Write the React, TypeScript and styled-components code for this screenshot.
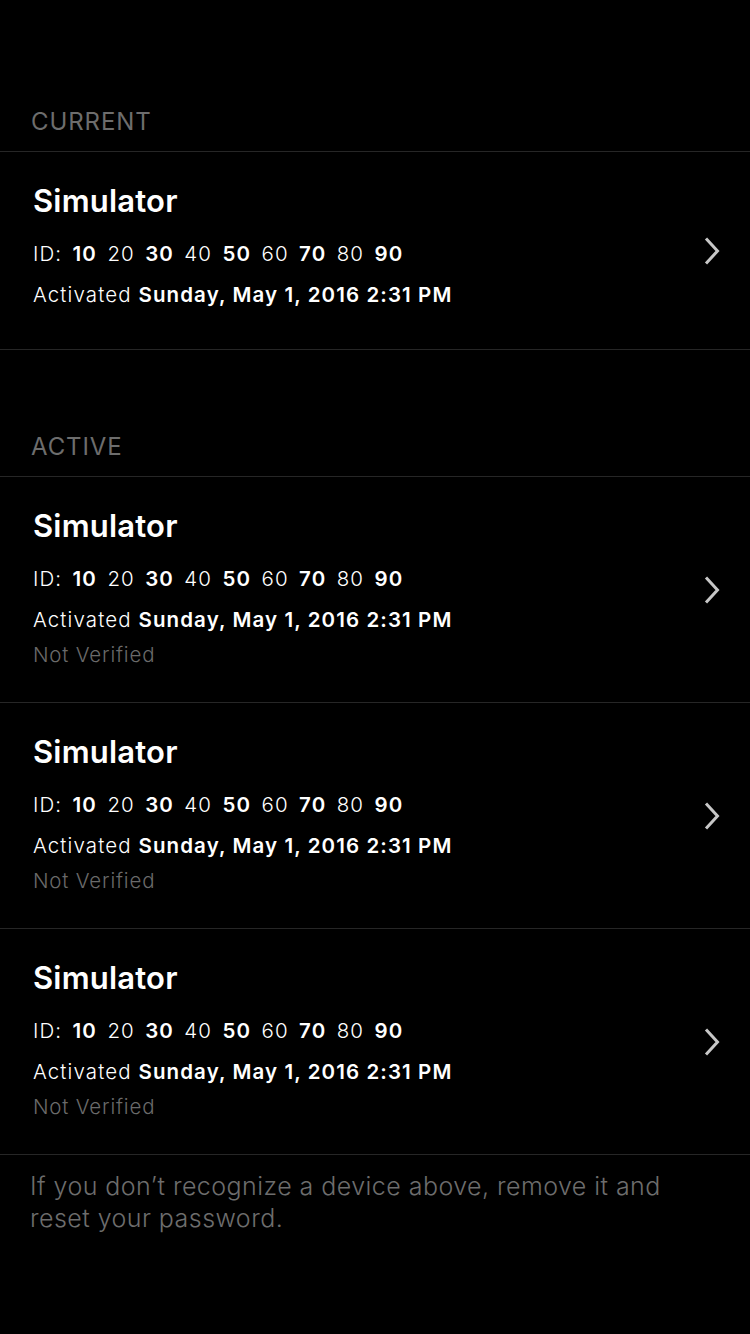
import React from "react";
import styled, { createGlobalStyle } from "styled-components";

const GlobalStyle = createGlobalStyle`
  html, body { margin: 0; padding: 0; background: #000; }
  body { font-family: Inter, "Noto Sans", "Liberation Sans", sans-serif; -webkit-font-smoothing: antialiased; }
`;

const Page = styled.div`
  width: 750px;
  min-height: 1334px;
  background: #000;
  padding-top: 25px;
  box-sizing: border-box;
`;

const SectionHeader = styled.div`
  height: 127px;
  box-sizing: border-box;
  display: flex;
  align-items: flex-end;
  padding: 0 31px 14px;
  border-bottom: 1px solid #262626;
  color: #6d6d6d;
  font-size: 24px;
  line-height: 30px;
  font-weight: 400;
  letter-spacing: 0.9px;
`;

const Row = styled.div`
  display: flex;
  align-items: center;
  border-bottom: 1px solid #262626;
  padding-left: 33px;
`;

const Info = styled.div<{ $verified?: boolean }>`
  flex: 1;
  display: flex;
  flex-direction: column;
  padding: 30px 0 ${(p) => (p.$verified ? 39 : 32)}px;
`;

const Title = styled.div`
  color: #fff;
  font-size: 31px;
  line-height: 38px;
  font-weight: 600;
  letter-spacing: 0.2px;
`;

const Line = styled.div<{ $gap: number; $wordSpace?: number }>`
  color: #fff;
  font-size: 20.5px;
  line-height: 30px;
  font-weight: 300;
  letter-spacing: 1.1px;
  word-spacing: ${(p) => p.$wordSpace ?? 0}px;
  margin-top: ${(p) => p.$gap}px;
  white-space: nowrap;
`;

const Strong = styled.span`
  font-weight: 600;
`;

const Muted = styled.div`
  color: #6a6a6a;
  font-size: 20.5px;
  line-height: 30px;
  font-weight: 300;
  letter-spacing: 0.8px;
  margin-top: 5px;
`;

const Chevron = styled.svg`
  display: block;
  width: 16px;
  height: 28px;
  margin-right: 30px;
  flex: none;
`;

const Footer = styled.p`
  margin: 0;
  padding: 15px 31px 0 30px;
  color: #6d6d6d;
  font-size: 25px;
  line-height: 32px;
  font-weight: 300;
  letter-spacing: 0.45px;
`;

const ids = [10, 20, 30, 40, 50, 60, 70, 80, 90];

function Device({ verified }: { verified?: boolean }) {
  return (
    <Row>
      <Info $verified={verified}>
        <Title>Simulator</Title>
        <Line $gap={19} $wordSpace={3.5}>
          ID:{" "}
          {ids.map((n, i) => (
            <React.Fragment key={n}>
              {i % 2 === 0 ? <Strong>{n}</Strong> : n}
              {i < ids.length - 1 ? " " : ""}
            </React.Fragment>
          ))}
        </Line>
        <Line $gap={11}>
          Activated <Strong>Sunday, May 1, 2016 2:31 PM</Strong>
        </Line>
        {!verified && <Muted>Not Verified</Muted>}
      </Info>
      <Chevron viewBox="0 0 16 28">
        <path d="M2 1.5 L13.5 14 L2 26.5" fill="none" stroke="#c7c7c7" strokeWidth="3" />
      </Chevron>
    </Row>
  );
}

export default function App() {
  return (
    <>
      <GlobalStyle />
      <Page>
        <SectionHeader>CURRENT</SectionHeader>
        <Device verified />
        <SectionHeader>ACTIVE</SectionHeader>
        <Device />
        <Device />
        <Device />
        <Footer>If you don’t recognize a device above, remove it and reset your password.</Footer>
      </Page>
    </>
  );
}
